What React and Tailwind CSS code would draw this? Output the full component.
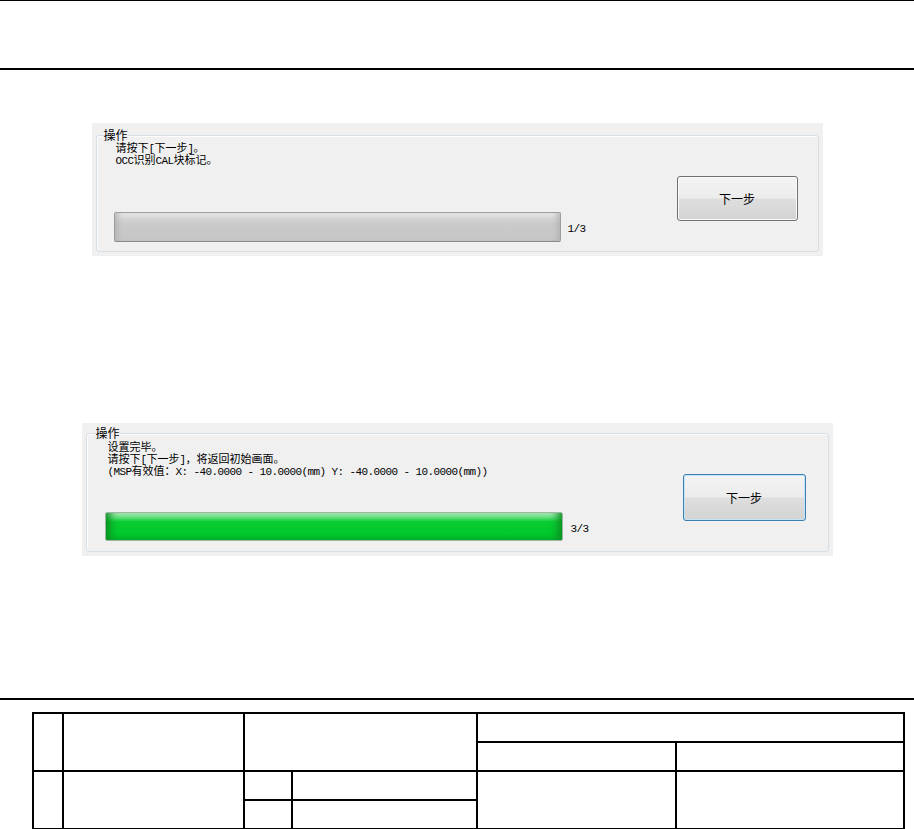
import React from 'react'

// ASCII runs are set in a half-width mono so they sit like the bitmap font in the capture
function Mixed({ text }) {
  return text
    .split(/([\x20-\x7e]+)/)
    .filter(Boolean)
    .map((s, i) =>
      /[\x20-\x7e]/.test(s) ? (
        <span key={i} className="font-['Liberation_Mono',monospace] text-[11px] leading-[12px] tracking-[-0.6px]">{s}</span>
      ) : (
        <span key={i} className="leading-[12px]">{s}</span>
      )
    )
}

function Line({ text }) {
  return (
    <div className="h-[12px] whitespace-nowrap">
      <Mixed text={text} />
    </div>
  )
}

function Button({ focused }) {
  return (
    <div
      className={
        focused
          ? "flex items-center justify-center w-[123px] h-[47px] rounded-[3px] border border-[#3c7fb1] shadow-[inset_0_0_0_1px_#c4e5f6] bg-[linear-gradient(to_bottom,#f4f4f4_0%,#ececec_48%,#dedede_52%,#d3d3d3_100%)] text-[12px]"
          : "flex items-center justify-center w-[121px] h-[45px] rounded-[3px] border border-[#707070] shadow-[inset_0_0_0_1px_#fafafa] bg-[linear-gradient(to_bottom,#f4f4f4_0%,#ececec_48%,#dedede_52%,#d3d3d3_100%)] text-[12px]"
      }
    >
      下一步
    </div>
  )
}

export default function App() {
  return (
    <div className="w-[914px] min-h-[829px] bg-white text-black font-['Noto_Sans_CJK_SC',sans-serif] overflow-hidden">
      <div className="h-[70px] border-t border-b-2 border-black" />

      {/* first capture: step 1 of 3 */}
      <div className="mt-[53px] mx-auto w-[731px] h-[133px] bg-[#f0f0f0] px-[4px] pt-[6px]">
        <fieldset className="h-[123px] border border-[#d5dfe5] rounded-[3px] shadow-[inset_1px_1px_0_#fdfdfd]">
          <legend className="ml-[7px] px-0 text-[12px] leading-[12px] bg-[#f0f0f0]">操作</legend>
          <div className="flex">
            <div className="flex-1 pl-[17px]">
              <div className="pl-[2px] text-[11px] leading-[12px]">
                <Line text="请按下[下一步]。" />
                <Line text="OCC识别CAL块标记。" />
              </div>
              <div className="mt-[47px] flex items-center">
                <div className="w-[447px] h-[30px] rounded-[2px] border border-[#9e9e9e] border-b-[#8a8a8a] bg-[linear-gradient(to_bottom,#ececec_0%,#d6d6d6_18%,#cacaca_40%,#c6c6c6_100%)] shadow-[inset_6px_0_6px_-4px_#b0b0b0,inset_-6px_0_6px_-4px_#b0b0b0]" />
                <span className="ml-[7px] text-[12px]"><Mixed text="1/3" /></span>
              </div>
            </div>
            <div className="pt-[35px] pr-[20px]">
              <Button />
            </div>
          </div>
        </fieldset>
      </div>

      {/* second capture: finished */}
      <div className="mt-[167px] mx-auto w-[751px] h-[133px] bg-[#f0f0f0] px-[4px] pt-[4px]">
        <fieldset className="h-[125px] border border-[#d5dfe5] rounded-[3px] shadow-[inset_1px_1px_0_#fdfdfd]">
          <legend className="ml-[9px] px-0 text-[12px] leading-[12px] bg-[#f0f0f0]">操作</legend>
          <div className="flex">
            <div className="flex-1 pl-[18px]">
              <div className="pl-[3px] pt-[1px] text-[11px] leading-[12px]">
                <Line text="设置完毕。" />
                <Line text="请按下[下一步]，将返回初始画面。" />
                <Line text="(MSP有效值：X: -40.0000 - 10.0000(mm) Y: -40.0000 - 10.0000(mm))" />
              </div>
              <div className="mt-[36px] flex items-center">
                <div className="w-[458px] h-[29px] rounded-[2px] border border-[#9cb8a0] bg-[linear-gradient(to_bottom,#c9f7cf_0%,#6fe488_14%,#0acd33_32%,#00c92c_75%,#04b82a_100%)] shadow-[inset_9px_0_8px_-5px_#0b8c22,inset_-9px_0_8px_-5px_#0b8c22]" />
                <span className="ml-[8px] text-[12px]"><Mixed text="3/3" /></span>
              </div>
            </div>
            <div className="pt-[35px] pr-[22px]">
              <Button focused />
            </div>
          </div>
        </fieldset>
      </div>

      <div className="mt-[142px] h-[2px] bg-black" />

      <div className="mt-[12px] ml-[32px] w-[873px] grid grid-cols-[28px_179px_46px_183px_197px_226px] grid-rows-[27px_27px_27px_27px] gap-[2px] p-[2px] bg-black">
        <div className="col-start-1 row-start-1 row-span-2 bg-white" />
        <div className="col-start-2 row-start-1 row-span-2 bg-white" />
        <div className="col-start-3 col-span-2 row-start-1 row-span-2 bg-white" />
        <div className="col-start-5 col-span-2 row-start-1 bg-white" />
        <div className="col-start-5 row-start-2 bg-white" />
        <div className="col-start-6 row-start-2 bg-white" />
        <div className="col-start-1 row-start-3 row-span-2 bg-white" />
        <div className="col-start-2 row-start-3 row-span-2 bg-white" />
        <div className="col-start-3 row-start-3 bg-white" />
        <div className="col-start-4 row-start-3 bg-white" />
        <div className="col-start-3 row-start-4 bg-white" />
        <div className="col-start-4 row-start-4 bg-white" />
        <div className="col-start-5 row-start-3 row-span-2 bg-white" />
        <div className="col-start-6 row-start-3 row-span-2 bg-white" />
      </div>
    </div>
  )
}
